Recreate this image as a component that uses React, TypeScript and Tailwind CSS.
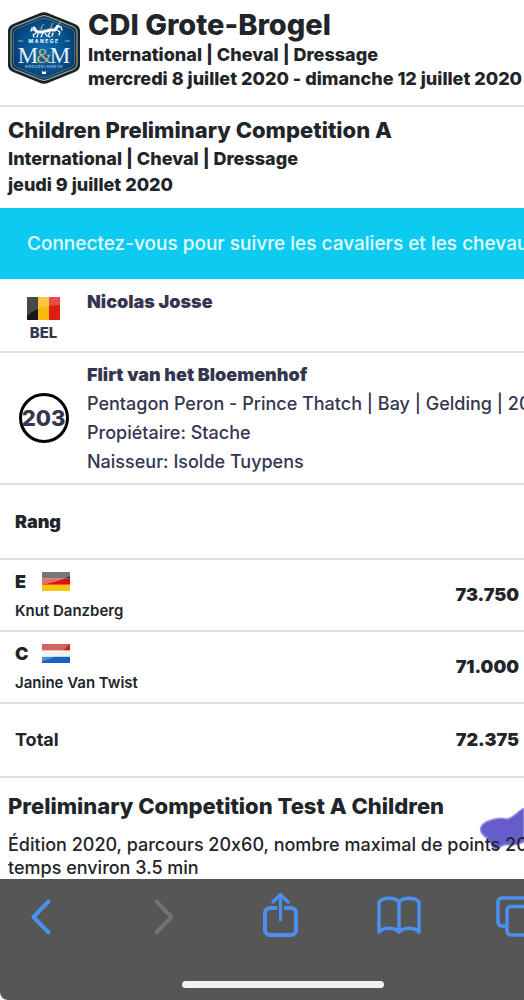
import type { ReactNode } from "react";

const JUDGES = [
  { letter: "E", name: "Knut Danzberg", country: "GER", score: "73.750" },
  { letter: "C", name: "Janine Van Twist", country: "NED", score: "71.000" },
];

function ClubLogo() {
  return (
    <svg viewBox="0 0 74 74" className="h-[74px] w-[74px] shrink-0" role="img" aria-label="Manège M&M">
      <defs>
        <radialGradient id="club" cx="50%" cy="50%" r="60%">
          <stop offset="0" stopColor="#0b6cb0" />
          <stop offset="0.6" stopColor="#07508c" />
          <stop offset="1" stopColor="#062c55" />
        </radialGradient>
      </defs>
      <path
        d="M32 2.5Q37 0 42 2.5L68 13Q73 15 73 20V54Q73 59 68 61L42 71.500Q37 74 32 71.500L6 61Q1 59 1 54V20Q1 15 6 13Z"
        fill="#152532"
      />
      <path
        d="M33 5.500Q37 3.500 41 5.500L66 15.500Q70 17 70 21V53Q70 57 66 58.500L41 68.500Q37 70.500 33 68.500L8 58.500Q4 57 4 53V21Q4 17 8 15.500Z"
        fill="url(#club)"
        stroke="#c7b87b"
        strokeWidth="1"
      />
      <path
        d="M33.500 8Q37 6.500 40.500 8L64 17.500Q67.500 19 67.500 22V52Q67.500 55 64 56.500L40.500 66Q37 67.500 33.500 66L10 56.500Q6.500 55 6.500 52V22Q6.500 19 10 17.500Z"
        fill="none"
        stroke="#7d8a6d"
        strokeWidth="0.6"
      />
      {/* pair of horses */}
      <g fill="none" stroke="#fff" strokeLinecap="round" strokeLinejoin="round">
        <path d="M27 17l2 3 2 1h5l2-1M40 20l3-1h5l2-3 1-1" strokeWidth="3" />
        <path
          d="M25 17l-1 3 2-1M29 22l-3 2 1 2M31 23l-1 3M36 22l-2 4M38 22l2 3M43 21l-2 4 2 1M46 22l-1 3M50 19l3 2-1 3M50 15l4 1 1 3"
          strokeWidth="1.300"
        />
      </g>
      <path d="M34 19q0-4 3-6M44 17q0-3 2-5M52 13l2-2" stroke="#d5b75c" strokeWidth="1" fill="none" />
      <path d="M11 30h5M58 30h5" stroke="#c6d6e4" strokeWidth="0.800" />
      <text x="37" y="32" textAnchor="middle" fontSize="5" letterSpacing="1.500" fontWeight="700" fill="#fff" fontFamily="Inter, sans-serif">
        MANEGE
      </text>
      <text x="21" y="52" textAnchor="middle" fontSize="23" fill="#e9f1f6" fontFamily="Liberation Serif, serif">
        M
      </text>
      <text x="53" y="52" textAnchor="middle" fontSize="23" fill="#e9f1f6" fontFamily="Liberation Serif, serif">
        M
      </text>
      <text x="37" y="52" textAnchor="middle" fontSize="20" fill="#bdb177" fontFamily="Liberation Serif, serif">
        &amp;
      </text>
      <text x="37" y="57" textAnchor="middle" fontSize="4" letterSpacing="0.500" fill="#a9c4d8" fontFamily="Inter, sans-serif">
        BREUGELHOEVE
      </text>
      <path d="M35 60l2 1 2-1v3h-4z" fill="#fff" />
    </svg>
  );
}

function Flag({ country, className }: { country: string; className: string }) {
  return (
    <svg viewBox="0 0 33 23" preserveAspectRatio="none" className={className} role="img" aria-label={country}>
      {country === "BEL" && (
        <>
          <path d="M0 0h11v23H0z" fill="#171717" />
          <path d="M11 0h11v23H11z" fill="#fbb70c" />
          <path d="M22 0h11v23H22z" fill="#de1d14" />
          <path d="M0 0h33v8Q10 9 0 19z" fill="#fff" opacity="0.220" />
        </>
      )}
      {country === "GER" && (
        <>
          <path d="M0 0h33v8H0z" fill="#252525" />
          <path d="M0 8h33v7.500H0z" fill="#d81508" />
          <path d="M0 15.500h33V23H0z" fill="#fcc40e" />
          <path d="M0 0h33v5Q25 9 15 12T0 15z" fill="#fff" opacity="0.380" />
        </>
      )}
      {country === "NED" && (
        <>
          <path d="M0 0h33v8H0z" fill="#c5271c" />
          <path d="M0 8h33v7.500H0z" fill="#efefef" />
          <path d="M0 15.500h33V23H0z" fill="#1763bf" />
          <path d="M0 0h32Q25 10 15 15T0 21z" fill="#fff" opacity="0.280" />
        </>
      )}
    </svg>
  );
}

function ToolbarButton({
  label,
  disabled = false,
  children,
}: {
  label: string;
  disabled?: boolean;
  children: ReactNode;
}) {
  return (
    <button
      type="button"
      aria-label={label}
      disabled={disabled}
      className="flex flex-1 justify-center text-[#4a90ee] disabled:text-[#727272]"
    >
      <svg
        viewBox="0 0 48 48"
        className="h-12 w-12"
        fill="none"
        stroke="currentColor"
        strokeWidth="4"
        strokeLinecap="round"
        strokeLinejoin="round"
      >
        {children}
      </svg>
    </button>
  );
}

export default function App() {
  return (
    <div className="overflow-hidden whitespace-nowrap bg-white font-['Inter',sans-serif] text-lg font-medium text-[#212529] [font-feature-settings:'calt'_0]">
      <header className="flex gap-[7px] border-b-2 border-[#dedfe0] pt-[7px] pb-3.5 pl-[7px]">
        <div className="pt-1">
          <ClubLogo />
        </div>
        <div className="font-extrabold leading-6">
          <h1 className="text-[29px] leading-9">CDI Grote-Brogel</h1>
          <p>International | Cheval | Dressage</p>
          <p>mercredi 8 juillet 2020 - dimanche 12 juillet 2020</p>
        </div>
      </header>

      <section className="pt-[9px] pb-2.5 pl-2 font-extrabold leading-[26px]">
        <h2 className="mb-0.5 text-[22px] leading-7">Children Preliminary Competition A</h2>
        <p>International | Cheval | Dressage</p>
        <p>jeudi 9 juillet 2020</p>
      </section>

      <a href="#login" className="block bg-[#0dcaf0] py-[22px] pl-[27px] text-[19px] leading-[27px] text-[#e2fbff]">
        Connectez-vous pour suivre les cavaliers et les chevaux
      </a>

      {/* Rider */}
      <section className="flex border-b-2 border-[#dedfe0] pb-2 text-[#34364f]">
        <div className="flex w-[87px] shrink-0 flex-col items-center pt-[18px]">
          <Flag country="BEL" className="h-[23px] w-[33px]" />
          <span className="mt-0.5 text-[15px] font-extrabold leading-[21px]">BEL</span>
        </div>
        <h3 className="pt-2 font-black leading-[29px]">Nicolas Josse</h3>
      </section>

      {/* Horse */}
      <section className="flex border-b-2 border-[#dedfe0] pt-[7px] pb-[7px] leading-[29px] text-[#34364f]">
        <div className="flex w-[87px] shrink-0 items-center justify-center">
          <span className="flex h-[50px] w-[50px] items-center justify-center rounded-full border-[3px] border-black text-[22px] font-extrabold">
            203
          </span>
        </div>
        <div>
          <h3 className="font-black">Flirt van het Bloemenhof</h3>
          <p>Pentagon Peron - Prince Thatch | Bay | Gelding | 2010</p>
          <p>Propiétaire: Stache</p>
          <p>Naisseur: Isolde Tuypens</p>
        </div>
      </section>

      <table className="w-full text-left">
        <thead>
          <tr className="h-[74px] border-b-2 border-[#dedfe0]">
            <th colSpan={2} className="pl-[15px] font-black">
              Rang
            </th>
          </tr>
        </thead>
        <tbody>
          {JUDGES.map(({ letter, name, country, score }) => (
            <tr key={letter} className="h-[72px] border-b-2 border-[#dedfe0]">
              <td className="pl-[15px]">
                <div className="flex items-center leading-[29px]">
                  <span className="w-[27px] font-black">{letter}</span>
                  <Flag country={country} className="h-[19px] w-7" />
                </div>
                <div className="pt-px text-[15px] font-semibold leading-[27px]">{name}</div>
              </td>
              <td className="pr-[5px] text-right font-black">{score}</td>
            </tr>
          ))}
        </tbody>
        <tfoot>
          <tr className="h-[74px] border-b-2 border-[#dedfe0] font-black">
            <th className="pl-[15px]">Total</th>
            <td className="pr-[5px] text-right">72.375</td>
          </tr>
        </tfoot>
      </table>

      <section className="relative pt-3 pl-2">
        {/* marker stroke */}
        <svg viewBox="0 0 46 44" className="absolute top-[30px] right-0 h-11 w-[46px]" aria-hidden="true">
          <path
            d="M46 0C39 4 35 10 29 11C20 9 10 12 5 16C-1 22 5 28 10 31C13 35 15 44 20 41C24 37 27 36 31 37C37 38 41 36 46 34Z"
            fill="#665dcd"
            stroke="#9a94e2"
            strokeWidth="1.500"
          />
        </svg>
        <div className="relative">
          <h2 className="mb-[11px] text-[22px] font-extrabold leading-8">Preliminary Competition Test A Children</h2>
          <p className="leading-[23px]">
            Édition 2020, parcours 20x60, nombre maximal de points 200,
            <br />
            temps environ 3.5 min
          </p>
        </div>
      </section>

      <footer className="overflow-hidden rounded-bl-lg bg-[#565656] pt-3.5 pb-3">
        <nav className="-ml-[18px] -mr-[52px] flex" aria-label="Navigateur">
          <ToolbarButton label="Page précédente">
            <path d="M31.500 8.500 16.500 24l15 15.500" />
          </ToolbarButton>
          <ToolbarButton label="Page suivante" disabled>
            <path d="M20.500 8.500 35.500 24l-15 15.500" />
          </ToolbarButton>
          <ToolbarButton label="Partager">
            <path d="M20.500 15H15a5 5 0 0 0-5 5v17a5 5 0 0 0 5 5h21a5 5 0 0 0 5-5V20a5 5 0 0 0-5-5h-5.500" />
            <path d="M25.500 27V2M18 9 25.500 1.500 33 9" strokeWidth="3.200" />
          </ToolbarButton>
          <ToolbarButton label="Signets">
            <path
              d="M25 9C21 4 9 4 5 9V39C10 34 20 34 25 39C30 34 40 34 45 39V9C41 4 29 4 25 9ZM25 9V39"
              strokeWidth="3.600"
            />
          </ToolbarButton>
          <ToolbarButton label="Onglets">
            <path d="M12 33H9a4 4 0 0 1-4-4V9a4 4 0 0 1 4-4h22a4 4 0 0 1 4 4v4" strokeWidth="3.600" />
            <rect x="14" y="13.500" width="30" height="28.500" rx="4" strokeWidth="3.600" />
          </ToolbarButton>
        </nav>
        <div className="mx-auto mt-10 h-[7px] w-[202px] translate-x-[21px] rounded-full bg-[#f1f1f1]" />
      </footer>
    </div>
  );
}
